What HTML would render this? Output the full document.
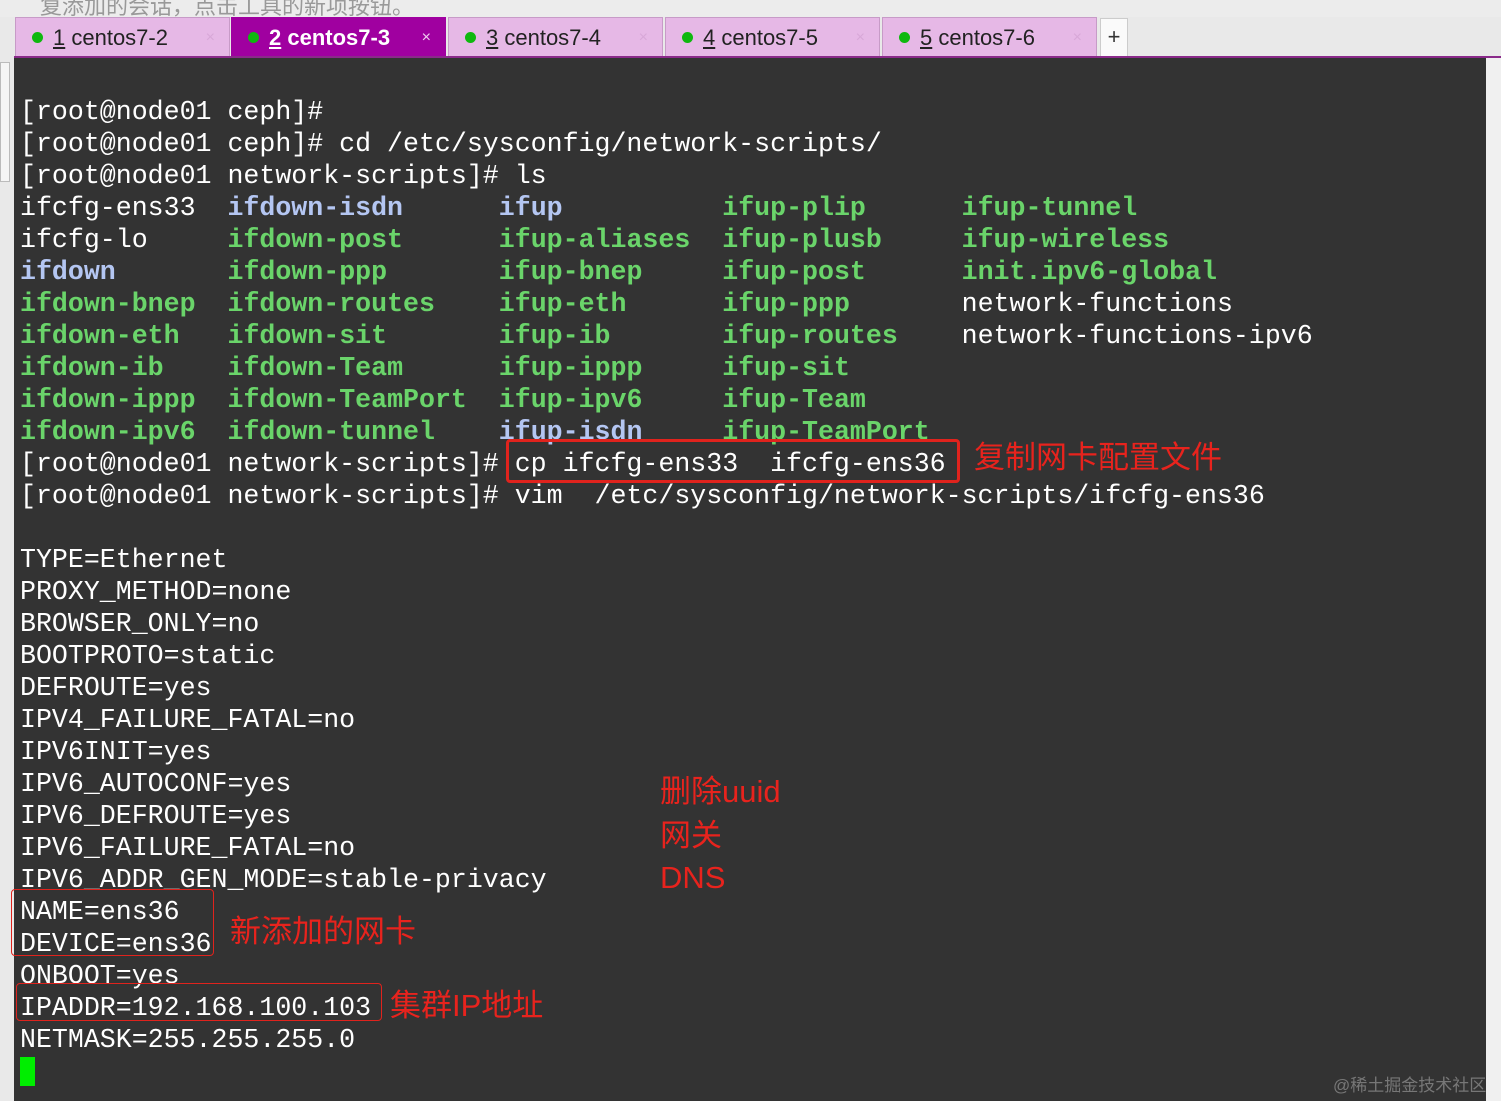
<!DOCTYPE html>
<html><head><meta charset="utf-8"><style>
*{margin:0;padding:0;box-sizing:border-box}
body{width:1501px;height:1101px;overflow:hidden;background:#e9e9e9;position:relative;font-family:"Liberation Sans","Noto Sans CJK SC",sans-serif}
.top{position:absolute;left:0;top:0;width:1501px;height:17px;background:#ececec;overflow:hidden}
.top span{position:absolute;left:40px;top:-11px;font-size:22px;color:#999}
.tab{position:absolute;top:17px;height:40px;width:215px;background:#e6b8e6;border:1px solid #c79bc7;font-size:22px;color:#222;line-height:40px;padding-left:16px}
.tab i{display:inline-block;width:11px;height:11px;border-radius:50%;background:#0fb80f;margin-right:10px;vertical-align:2px}
.tab u{text-decoration:underline}
.tab b.x{position:absolute;right:14px;top:0;font-weight:normal;color:#d8a8d8;font-size:16px}
.tab.act{background:#a000a0;color:#fff;font-weight:bold;border-color:#a000a0}
.tab.act b.x{color:#f0d0f0}
.plus{position:absolute;left:1100px;top:18px;width:28px;height:39px;background:#fafafa;border:1px solid #ccc;font-size:22px;text-align:center;line-height:36px;color:#333}
.line{position:absolute;left:14px;top:56px;width:1487px;height:2px;background:#8a2a8a}
.term{position:absolute;left:14px;top:58px;width:1472px;height:1043px;background:#333333}
.sb{position:absolute;left:1486px;top:58px;width:15px;height:1043px;background:#f0f0f0}
.side{position:absolute;left:0;top:62px;width:10px;height:120px;border:1px solid #bbb;background:#f5f5f5}
.t{position:absolute;left:20px;font-family:"Liberation Mono",monospace;font-size:26.6px;line-height:32px;color:#fff;white-space:pre}
.b{color:#b4c6f2;font-weight:bold}
.g{color:#6ad46a;font-weight:bold}
.r{position:absolute;color:#e8231d;font-size:31px;line-height:36px;font-family:"Liberation Sans","Noto Sans CJK SC",sans-serif}
.box{position:absolute;border:2px solid #e0231d;border-radius:4px}
.cur{position:absolute;left:20px;top:1057px;width:15px;height:29px;background:#00ee00}
.wm{position:absolute;left:1333px;top:1071px;font-size:17px;color:#777}
</style></head><body>
<div class="top"><span>复添加的会话，点击工具的新项按钮。</span></div>
<div class="side"></div>
<div class="tab" style="left:15px"><i></i><u>1</u> centos7-2<b class="x">×</b></div>
<div class="tab act" style="left:231px"><i></i><u>2</u> centos7-3<b class="x">×</b></div>
<div class="tab" style="left:448px"><i></i><u>3</u> centos7-4<b class="x">×</b></div>
<div class="tab" style="left:665px"><i></i><u>4</u> centos7-5<b class="x">×</b></div>
<div class="tab" style="left:882px"><i></i><u>5</u> centos7-6<b class="x">×</b></div>
<div class="plus">+</div>
<div class="line"></div>
<div class="term"></div>
<div class="sb"></div>
<div class="t" style="top:96px">[root@node01 ceph]#
[root@node01 ceph]# cd /etc/sysconfig/network-scripts/
[root@node01 network-scripts]# ls
ifcfg-ens33  <span class="b">ifdown-isdn</span>      <span class="b">ifup</span>          <span class="g">ifup-plip</span>      <span class="g">ifup-tunnel</span>
ifcfg-lo     <span class="g">ifdown-post</span>      <span class="g">ifup-aliases</span>  <span class="g">ifup-plusb</span>     <span class="g">ifup-wireless</span>
<span class="b">ifdown</span>       <span class="g">ifdown-ppp</span>       <span class="g">ifup-bnep</span>     <span class="g">ifup-post</span>      <span class="g">init.ipv6-global</span>
<span class="g">ifdown-bnep</span>  <span class="g">ifdown-routes</span>    <span class="g">ifup-eth</span>      <span class="g">ifup-ppp</span>       network-functions
<span class="g">ifdown-eth</span>   <span class="g">ifdown-sit</span>       <span class="g">ifup-ib</span>       <span class="g">ifup-routes</span>    network-functions-ipv6
<span class="g">ifdown-ib</span>    <span class="g">ifdown-Team</span>      <span class="g">ifup-ippp</span>     <span class="g">ifup-sit</span>
<span class="g">ifdown-ippp</span>  <span class="g">ifdown-TeamPort</span>  <span class="g">ifup-ipv6</span>     <span class="g">ifup-Team</span>
<span class="g">ifdown-ipv6</span>  <span class="g">ifdown-tunnel</span>    <span class="b">ifup-isdn</span>     <span class="g">ifup-TeamPort</span>
[root@node01 network-scripts]# cp ifcfg-ens33  ifcfg-ens36
[root@node01 network-scripts]# vim  /etc/sysconfig/network-scripts/ifcfg-ens36

TYPE=Ethernet
PROXY_METHOD=none
BROWSER_ONLY=no
BOOTPROTO=static
DEFROUTE=yes
IPV4_FAILURE_FATAL=no
IPV6INIT=yes
IPV6_AUTOCONF=yes
IPV6_DEFROUTE=yes
IPV6_FAILURE_FATAL=no
IPV6_ADDR_GEN_MODE=stable-privacy
NAME=ens36
DEVICE=ens36
ONBOOT=yes
IPADDR=192.168.100.103
NETMASK=255.255.255.0</div>
<div class="cur"></div>
<div class="box" style="left:506px;top:439px;width:454px;height:44px;border-width:3px"></div>
<div class="r" style="left:974px;top:440px">复制网卡配置文件</div>
<div class="r" style="left:660px;top:774px">删除uuid</div>
<div class="r" style="left:660px;top:818px">网关</div>
<div class="r" style="left:660px;top:860px">DNS</div>
<div class="box" style="left:11px;top:889px;width:203px;height:67px;border-width:1.5px"></div>
<div class="r" style="left:230px;top:914px">新添加的网卡</div>
<div class="box" style="left:16px;top:983px;width:366px;height:38px;border-width:1.5px"></div>
<div class="r" style="left:390px;top:988px">集群IP地址</div>
<div class="wm">@稀土掘金技术社区</div>
</body></html>
